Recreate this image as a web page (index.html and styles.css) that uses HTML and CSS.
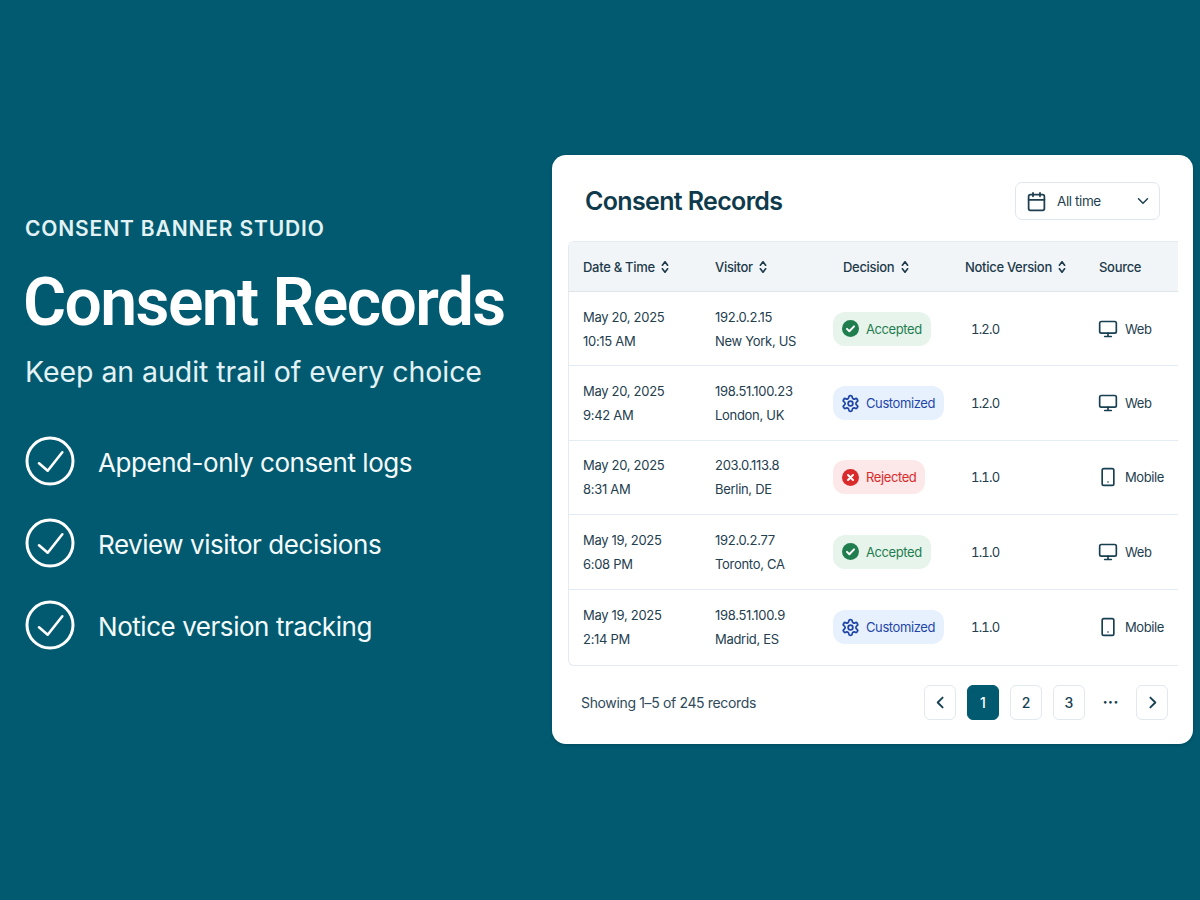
FILE: index.html
```html
<!DOCTYPE html>
<html lang="en">

<head>
    <meta charset="utf-8">
    <title>Consent Records</title>
    <link rel="stylesheet" href="styles.css">
</head>

<body>
    <svg class="defs" width="0" height="0" aria-hidden="true">
        <symbol id="i-sort" viewBox="0 0 24 24"><path d="m7.500 15 4.500 6 4.500-6M7.500 9 12 3l4.500 6"/></symbol>
        <symbol id="i-monitor" viewBox="0 0 24 24"><rect x="2" y="3" width="20" height="14" rx="2"/><path d="M8 21h8M12 17v4"/></symbol>
        <symbol id="i-mobile" viewBox="0 0 24 24"><rect x="5" y="2" width="14" height="20" rx="2"/><path d="M12 18h.01"/></symbol>
        <symbol id="i-gear" viewBox="0 0 24 24"><path d="M12.22 2h-.44a2 2 0 0 0-2 2v.18a2 2 0 0 1-1 1.73l-.43.25a2 2 0 0 1-2 0l-.15-.08a2 2 0 0 0-2.73.73l-.22.38a2 2 0 0 0 .73 2.73l.15.1a2 2 0 0 1 1 1.72v.51a2 2 0 0 1-1 1.74l-.15.09a2 2 0 0 0-.73 2.73l.22.38a2 2 0 0 0 2.73.73l.15-.08a2 2 0 0 1 2 0l.43.25a2 2 0 0 1 1 1.73V20a2 2 0 0 0 2 2h.44a2 2 0 0 0 2-2v-.18a2 2 0 0 1 1-1.73l.43-.25a2 2 0 0 1 2 0l.15.08a2 2 0 0 0 2.73-.73l.22-.39a2 2 0 0 0-.73-2.73l-.15-.08a2 2 0 0 1-1-1.74v-.5a2 2 0 0 1 1-1.74l.15-.09a2 2 0 0 0 .73-2.73l-.22-.38a2 2 0 0 0-2.73-.73l-.15.08a2 2 0 0 1-2 0l-.43-.25a2 2 0 0 1-1-1.73V4a2 2 0 0 0-2-2z"/><circle cx="12" cy="12" r="3"/></symbol>
        <symbol id="i-ok" viewBox="0 0 24 24"><circle class="solid" cx="12" cy="12" r="12"/><path class="mark" d="m7 12.500 3.400 3.400L17 9"/></symbol>
        <symbol id="i-no" viewBox="0 0 24 24"><circle class="solid" cx="12" cy="12" r="12"/><path class="mark" d="m8.500 8.500 7 7M15.500 8.500l-7 7"/></symbol>
        <symbol id="i-check" viewBox="0 0 50 50"><circle cx="25" cy="25" r="23"/><path class="tick" d="M14 27.300l8.700 7.400L37.300 16.300"/></symbol>
    </svg>

    <div class="page">
        <section class="intro">
            <p class="eyebrow">CONSENT BANNER STUDIO</p>
            <h1>Consent Records</h1>
            <p class="lead">Keep an audit trail of every choice</p>
            <ul class="points">
                <li><svg class="point-icon"><use href="#i-check"/></svg><span>Append-only consent logs</span></li>
                <li><svg class="point-icon"><use href="#i-check"/></svg><span>Review visitor decisions</span></li>
                <li><svg class="point-icon"><use href="#i-check"/></svg><span>Notice version tracking</span></li>
            </ul>
        </section>

        <section class="card">
            <div class="card-head">
                <h2>Consent Records</h2>
                <div class="range">
                    <svg class="ico range-cal" viewBox="0 0 24 24"><rect x="3" y="4" width="18" height="18" rx="2"/><path d="M8 2v4M16 2v4M3 10h18"/></svg>
                    <span>All time</span>
                    <svg class="ico range-arrow" viewBox="0 0 24 24"><path d="m6 9 6 6 6-6"/></svg>
                </div>
            </div>

            <div class="records">
                <div class="row row-head">
                    <div>Date &amp; Time <svg class="ico sort"><use href="#i-sort"/></svg></div>
                    <div>Visitor <svg class="ico sort"><use href="#i-sort"/></svg></div>
                    <div class="col-decision">Decision <svg class="ico sort"><use href="#i-sort"/></svg></div>
                    <div>Notice Version <svg class="ico sort"><use href="#i-sort"/></svg></div>
                    <div>Source</div>
                </div>

                <div class="row">
                    <div>May 20, 2025<br>10:15 AM</div>
                    <div>192.0.2.15<br>New York, US</div>
                    <div><span class="badge ok"><svg class="badge-icon"><use href="#i-ok"/></svg>Accepted</span></div>
                    <div class="col-version">1.2.0</div>
                    <div class="source"><svg class="ico source-icon"><use href="#i-monitor"/></svg>Web</div>
                </div>
                <div class="row">
                    <div>May 20, 2025<br>9:42 AM</div>
                    <div>198.51.100.23<br>London, UK</div>
                    <div><span class="badge custom"><svg class="ico badge-icon"><use href="#i-gear"/></svg>Customized</span></div>
                    <div class="col-version">1.2.0</div>
                    <div class="source"><svg class="ico source-icon"><use href="#i-monitor"/></svg>Web</div>
                </div>
                <div class="row">
                    <div>May 20, 2025<br>8:31 AM</div>
                    <div>203.0.113.8<br>Berlin, DE</div>
                    <div><span class="badge no"><svg class="badge-icon"><use href="#i-no"/></svg>Rejected</span></div>
                    <div class="col-version">1.1.0</div>
                    <div class="source"><svg class="ico source-icon"><use href="#i-mobile"/></svg>Mobile</div>
                </div>
                <div class="row">
                    <div>May 19, 2025<br>6:08 PM</div>
                    <div>192.0.2.77<br>Toronto, CA</div>
                    <div><span class="badge ok"><svg class="badge-icon"><use href="#i-ok"/></svg>Accepted</span></div>
                    <div class="col-version">1.1.0</div>
                    <div class="source"><svg class="ico source-icon"><use href="#i-monitor"/></svg>Web</div>
                </div>
                <div class="row row-last">
                    <div>May 19, 2025<br>2:14 PM</div>
                    <div>198.51.100.9<br>Madrid, ES</div>
                    <div><span class="badge custom"><svg class="ico badge-icon"><use href="#i-gear"/></svg>Customized</span></div>
                    <div class="col-version">1.1.0</div>
                    <div class="source"><svg class="ico source-icon"><use href="#i-mobile"/></svg>Mobile</div>
                </div>
            </div>

            <div class="card-foot">
                <span class="count">Showing 1–5 of 245 records</span>
                <div class="pager">
                    <a class="pg pg-arrow"><svg class="ico" viewBox="0 0 24 24"><path d="m15 5-7 7 7 7"/></svg></a>
                    <a class="pg current">1</a>
                    <a class="pg">2</a>
                    <a class="pg">3</a>
                    <span class="more">···</span>
                    <a class="pg pg-arrow"><svg class="ico" viewBox="0 0 24 24"><path d="m9 5 7 7-7 7"/></svg></a>
                </div>
            </div>
        </section>
    </div>
</body>

</html>
```

FILE: styles.css
```css
* {
    margin: 0;
    padding: 0;
    box-sizing: border-box;
}

body {
    background: #015a70;
    font-family: Inter, "Liberation Sans", sans-serif;
    color: #24404f;
}

.defs {
    position: absolute;
}

.page {
    display: flex;
    align-items: center;
    justify-content: space-between;
    height: 900px;
    padding: 0 7px 1px 25px;
}

.ico {
    fill: none;
    stroke: currentColor;
    stroke-width: 2;
    stroke-linecap: round;
    stroke-linejoin: round;
}

/* left column */
.intro {
    flex-shrink: 0;
    padding-bottom: 34px;
}

.eyebrow {
    font-size: 21px;
    line-height: 26px;
    font-weight: 600;
    letter-spacing: 0.85px;
    color: #e3f2f5;
}

h1 {
    margin: 22px 0 0 -2px;
    font-family: Roboto, Inter, sans-serif;
    font-size: 66px;
    line-height: 78px;
    font-weight: 600;
    letter-spacing: -1.600px;
    white-space: nowrap;
    color: #fff;
}

.lead {
    margin-top: 12px;
    font-size: 28.500px;
    line-height: 36px;
    letter-spacing: -0.06px;
    color: #e3f2f5;
}

.points {
    margin-top: 46px;
    list-style: none;
    display: flex;
    flex-direction: column;
    gap: 32px;
}

.points li {
    display: flex;
    align-items: center;
    gap: 23px;
    font-size: 26px;
    letter-spacing: -0.45px;
    color: #f4fafb;
}

.points span {
    margin-top: 4px;
}

.point-icon {
    width: 50px;
    height: 50px;
    fill: none;
    stroke: #fff;
    stroke-width: 3;
    stroke-linecap: round;
    stroke-linejoin: round;
}

.tick {
    stroke-width: 2.600;
}

/* card */
.card {
    flex-shrink: 0;
    width: 641px;
    padding: 27px 15px 24px 16px;
    background: #fff;
    border-radius: 14px;
    box-shadow: 0 1px 3px rgba(0, 40, 50, .3);
}

.card-head {
    display: flex;
    align-items: center;
    justify-content: space-between;
    padding: 0 18px 0 17px;
}

h2 {
    font-size: 25px;
    font-weight: 600;
    letter-spacing: -0.65px;
    color: #0f3a4c;
}

.range {
    display: flex;
    align-items: center;
    width: 145px;
    height: 38px;
    padding: 0 7px 0 10px;
    border: 1px solid #dfe7ee;
    border-radius: 7px;
    font-size: 13.500px;
    letter-spacing: -0.4px;
    color: #1f3f50;
}

.range-cal {
    width: 21px;
    height: 21px;
    margin-right: 10px;
}

.range-arrow {
    width: 18px;
    height: 18px;
    margin-left: auto;
}

.records {
    margin-top: 21px;
    border: 1px solid #e4ebf0;
    border-right: 0;
    border-radius: 6px 0 0 6px;
}

.row {
    display: grid;
    grid-template-columns: 146px 118px 132px 134px 1fr;
    align-items: center;
    height: 74.400px;
    border-bottom: 1px solid #e3ebf3;
    font-size: 13px;
    line-height: 24px;
    letter-spacing: -0.3px;
    color: #24404f;
}

.row > div:first-child {
    padding-left: 14px;
}

.row-last {
    height: 75.400px;
    border-bottom: 0;
}

.row-head {
    height: 50px;
    background: #f2f5f7;
    border-bottom: 1px solid #dfe6ea;
    font-weight: 500;
    color: #1c3a4b;
}

.sort {
    width: 14px;
    height: 14px;
    stroke-width: 2.800;
    vertical-align: -2px;
}

.col-decision {
    padding-left: 10px;
}

.col-version {
    padding-left: 6px;
    font-variant-numeric: tabular-nums;
    letter-spacing: -0.8px;
}

.source {
    display: flex;
    align-items: center;
    gap: 7px;
    margin-left: -1px;
    letter-spacing: -0.4px;
}

.source-icon {
    width: 20px;
    height: 20px;
    color: #173f52;
}

.badge {
    display: inline-flex;
    align-items: center;
    gap: 7px;
    height: 34px;
    padding: 0 9px;
    border-radius: 12px;
    letter-spacing: -0.4px;
    vertical-align: middle;
}

.badge-icon {
    width: 17px;
    height: 17px;
}

.badge .ico {
    width: 19px;
    height: 19px;
    margin: 0 -1px;
    stroke-width: 2.200;
}

.solid {
    fill: currentColor;
    stroke: none;
}

.mark {
    fill: none;
    stroke: #fff;
    stroke-width: 2.800;
    stroke-linecap: round;
    stroke-linejoin: round;
}

.ok {
    background: #e6f4ec;
    color: #1f7d4e;
}

.custom {
    background: #e6f1fd;
    color: #1f46a6;
}

.no {
    background: #fce8e8;
    color: #d92b2b;
}

.card-foot {
    display: flex;
    align-items: center;
    justify-content: space-between;
    margin-top: 19px;
    padding: 0 10px 0 13px;
}

.count {
    font-size: 14px;
    letter-spacing: -0.35px;
    color: #2f4a5a;
}

.pager {
    display: flex;
    align-items: center;
    gap: 11px;
}

.pg {
    display: flex;
    align-items: center;
    justify-content: center;
    width: 32px;
    height: 35px;
    border: 1px solid #e1e8ee;
    border-radius: 6px;
    font-size: 14px;
    font-weight: 500;
    color: #173f52;
}

.pg-arrow svg {
    width: 17px;
    height: 17px;
    stroke-width: 2.600;
}

.current {
    background: #015a70;
    border-color: #015a70;
    color: #fff;
}

.more {
    width: 29px;
    text-align: center;
    font-size: 16px;
    font-weight: 700;
    color: #173f52;
}
```
